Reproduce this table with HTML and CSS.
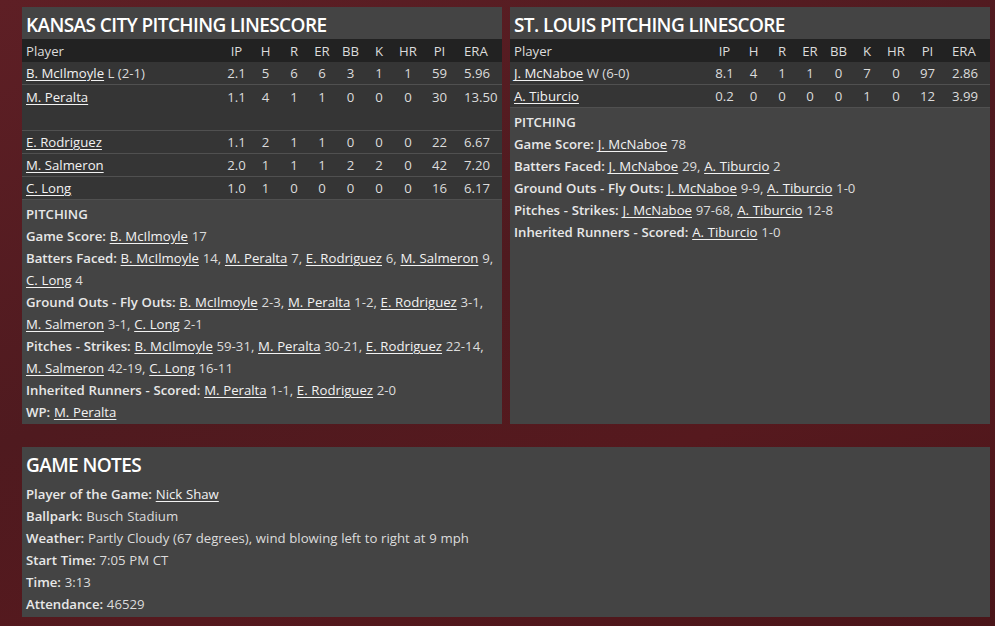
FILE: index.html
```html
<!DOCTYPE html>
<html>
<head>
<meta charset="utf-8">
<link rel="stylesheet" href="styles.css">
</head>
<body>
<div class="page">
  <div class="top">
    <section class="panel">
      <h2 class="title">KANSAS CITY PITCHING LINESCORE</h2>
      <div class="row head">
        <span class="name">Player</span><span>IP</span><span>H</span><span>R</span><span>ER</span><span>BB</span><span>K</span><span>HR</span><span>PI</span><span class="era">ERA</span>
      </div>
      <div class="row">
        <span class="name"><a>B. McIlmoyle</a> L (2-1)</span><span>2.1</span><span>5</span><span>6</span><span>6</span><span>3</span><span>1</span><span>1</span><span>59</span><span class="era">5.96</span>
      </div>
      <div class="row noline">
        <span class="name"><a>M. Peralta</a></span><span>1.1</span><span>4</span><span>1</span><span>1</span><span>0</span><span>0</span><span>0</span><span>30</span><span class="era">13.50</span>
      </div>
      <div class="row blank"></div>
      <div class="row">
        <span class="name"><a>E. Rodriguez</a></span><span>1.1</span><span>2</span><span>1</span><span>1</span><span>0</span><span>0</span><span>0</span><span>22</span><span class="era">6.67</span>
      </div>
      <div class="row">
        <span class="name"><a>M. Salmeron</a></span><span>2.0</span><span>1</span><span>1</span><span>1</span><span>2</span><span>2</span><span>0</span><span>42</span><span class="era">7.20</span>
      </div>
      <div class="row">
        <span class="name"><a>C. Long</a></span><span>1.0</span><span>1</span><span>0</span><span>0</span><span>0</span><span>0</span><span>0</span><span>16</span><span class="era">6.17</span>
      </div>
      <div class="info">
        <p class="sub">PITCHING</p>
        <p><b>Game Score:</b> <a>B. McIlmoyle</a> 17</p>
        <p><b>Batters Faced:</b> <a>B. McIlmoyle</a> 14, <a>M. Peralta</a> 7, <a>E. Rodriguez</a> 6, <a>M. Salmeron</a> 9, <a>C. Long</a> 4</p>
        <p><b>Ground Outs - Fly Outs:</b> <a>B. McIlmoyle</a> 2-3, <a>M. Peralta</a> 1-2, <a>E. Rodriguez</a> 3-1, <a>M. Salmeron</a> 3-1, <a>C. Long</a> 2-1</p>
        <p><b>Pitches - Strikes:</b> <a>B. McIlmoyle</a> 59-31, <a>M. Peralta</a> 30-21, <a>E. Rodriguez</a> 22-14, <a>M. Salmeron</a> 42-19, <a>C. Long</a> 16-11</p>
        <p><b>Inherited Runners - Scored:</b> <a>M. Peralta</a> 1-1, <a>E. Rodriguez</a> 2-0</p>
        <p><b>WP:</b> <a>M. Peralta</a></p>
      </div>
    </section>
    <section class="panel">
      <h2 class="title">ST. LOUIS PITCHING LINESCORE</h2>
      <div class="row head">
        <span class="name">Player</span><span>IP</span><span>H</span><span>R</span><span>ER</span><span>BB</span><span>K</span><span>HR</span><span>PI</span><span class="era">ERA</span>
      </div>
      <div class="row">
        <span class="name"><a>J. McNaboe</a> W (6-0)</span><span>8.1</span><span>4</span><span>1</span><span>1</span><span>0</span><span>7</span><span>0</span><span>97</span><span class="era">2.86</span>
      </div>
      <div class="row">
        <span class="name"><a>A. Tiburcio</a></span><span>0.2</span><span>0</span><span>0</span><span>0</span><span>0</span><span>1</span><span>0</span><span>12</span><span class="era">3.99</span>
      </div>
      <div class="info">
        <p class="sub">PITCHING</p>
        <p><b>Game Score:</b> <a>J. McNaboe</a> 78</p>
        <p><b>Batters Faced:</b> <a>J. McNaboe</a> 29, <a>A. Tiburcio</a> 2</p>
        <p><b>Ground Outs - Fly Outs:</b> <a>J. McNaboe</a> 9-9, <a>A. Tiburcio</a> 1-0</p>
        <p><b>Pitches - Strikes:</b> <a>J. McNaboe</a> 97-68, <a>A. Tiburcio</a> 12-8</p>
        <p><b>Inherited Runners - Scored:</b> <a>A. Tiburcio</a> 1-0</p>
      </div>
    </section>
  </div>
  <section class="panel notes">
    <h2 class="title">GAME NOTES</h2>
    <div class="info">
      <p><b>Player of the Game:</b> <a>Nick Shaw</a></p>
      <p><b>Ballpark:</b> Busch Stadium</p>
      <p><b>Weather:</b> Partly Cloudy (67 degrees), wind blowing left to right at 9 mph</p>
      <p><b>Start Time:</b> 7:05 PM CT</p>
      <p><b>Time:</b> 3:13</p>
      <p><b>Attendance:</b> 46529</p>
    </div>
  </section>
</div>
</body>
</html>
```
FILE: styles.css
```css
* { box-sizing: border-box; }
html, body { margin: 0; height: 100%; }
body {
  background: linear-gradient(160deg, #5e1f25 0%, #4f1a1f 45%, #56191e 70%, #4a1519 100%);
  font-family: "Open Sans", sans-serif;
  font-size: 13.2px;
  color: #dcdcdc;
  overflow: hidden;
}
.page {
  padding: 7px 5px 0 22px;
  display: flex;
  flex-direction: column;
  gap: 23px;
}
.top {
  display: flex;
  gap: 8px;
}
.panel {
  background: #444444;
  width: 480px;
}
.notes { width: 968px; height: 170px; }
.title {
  margin: 0;
  height: 32px;
  padding: 7px 4px 0;
  font-size: 19px;
  font-weight: 600;
  color: #ffffff;
  line-height: 22px;
  letter-spacing: -0.6px;
}
.notes .title { height: 36px; }
.row {
  display: grid;
  grid-template-columns: 200px 29px 29px 28px 28px 29px 28px 30px 33px 46px;
  height: 23px;
  align-items: center;
  background: #353535;
  border-bottom: 1px solid #505050;
  text-align: center;
}
.row.noline { border-bottom: none; height: 23px; }
.row.blank { height: 23px; }
.row.head { background: #222222; border-bottom: none; }
.row .name { text-align: left; padding-left: 4px; white-space: nowrap; }
.row .era { text-align: left; padding-left: 8px; }
a {
  color: #f2f2f2;
  text-decoration: underline;
  text-underline-offset: 2px;
  white-space: nowrap;
}
.info { padding: 3px 4px 1px; }
.info p { margin: 0; line-height: 22px; word-spacing: 0.3px; }
.info b { font-weight: 600; color: #e8e8e8; }
.info .sub { font-weight: 600; color: #e8e8e8; }
.notes .info { padding-top: 0; }
```
